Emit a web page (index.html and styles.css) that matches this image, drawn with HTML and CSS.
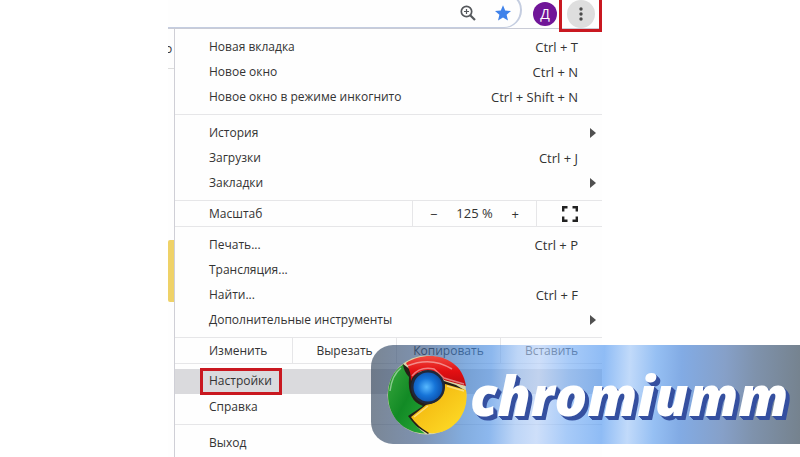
FILE: index.html
```html
<!DOCTYPE html>
<html lang="ru">
<head>
<meta charset="utf-8">
<title>Меню браузера</title>
<link rel="stylesheet" href="styles.css">
</head>
<body>
<main class="shot">
  <header class="toolbar">
    <div class="omnibox">
      <button class="tool" aria-label="Масштаб страницы">
        <svg width="18" height="18" viewBox="0 0 18 18" fill="none" stroke="#55585c" stroke-width="1.7"><circle cx="7.5" cy="7.5" r="5.200"/><path d="M11.2 11.2L16 16" stroke-width="2.2"/><path d="M5 7.5h5M7.5 5v5" stroke-width="1.2"/></svg>
      </button>
      <button class="tool" aria-label="В закладки">
        <svg width="18" height="18" viewBox="0 0 18 18"><path fill="#3f82ea" d="M9 1.2l2.2 5.3 5.8.5-4.4 3.8 1.4 5.7L9 13.4l-5 3.1 1.4-5.7L1 7l5.800-.5z"/></svg>
      </button>
    </div>
    <button class="avatar">Д</button>
    <button class="more" aria-label="Меню">
      <svg width="28" height="28" viewBox="0 0 28 28"><circle cx="14" cy="14" r="14" fill="#dedede"/><g fill="#4b4b4b"><circle cx="14" cy="9" r="1.7"/><circle cx="14" cy="14" r="1.7"/><circle cx="14" cy="19" r="1.7"/></g></svg>
    </button>
  </header>
  <div class="content">
    <aside class="page"><div class="strip">о</div><div class="mark"></div></aside>
    <nav class="menu">
      <div class="group">
        <button class="item"><span>Новая вкладка</span><kbd>Ctrl + T</kbd></button>
        <button class="item"><span>Новое окно</span><kbd>Ctrl + N</kbd></button>
        <button class="item"><span>Новое окно в режиме инкогнито</span><kbd>Ctrl + Shift + N</kbd></button>
      </div>
      <div class="group">
        <button class="item sub"><span>История</span></button>
        <button class="item"><span>Загрузки</span><kbd>Ctrl + J</kbd></button>
        <button class="item sub"><span>Закладки</span></button>
      </div>
      <div class="split zoom">
        <span class="name">Масштаб</span>
        <div class="level"><button>−</button><span>125 %</span><button>+</button></div>
        <button class="full" aria-label="Полный экран">
          <svg width="16" height="16" viewBox="0 0 16 16" fill="none" stroke="#222" stroke-width="2.400"><path d="M1.200 5.500V1.200H5.500M10.500 1.200h4.300v4.300M14.800 10.500v4.300h-4.300M5.500 14.800H1.200v-4.300"/></svg>
        </button>
      </div>
      <div class="group">
        <button class="item"><span>Печать...</span><kbd>Ctrl + P</kbd></button>
        <button class="item"><span>Трансляция...</span></button>
        <button class="item"><span>Найти...</span><kbd>Ctrl + F</kbd></button>
        <button class="item sub"><span>Дополнительные инструменты</span></button>
      </div>
      <div class="split edit">
        <span class="name">Изменить</span>
        <button>Вырезать</button>
        <button>Копировать</button>
        <button>Вставить</button>
      </div>
      <div class="group">
        <button class="item active"><span class="framed">Настройки</span></button>
        <button class="item"><span>Справка</span></button>
      </div>
      <div class="group">
        <button class="item"><span>Выход</span></button>
      </div>
    </nav>
  </div>
</main>
<div class="banner">
  <svg class="logo" width="82" height="80" viewBox="0 0 82 80">
    <defs>
      <linearGradient id="red" x1="0" y1="0" x2="0" y2="1"><stop offset="0" stop-color="#f04a40"/><stop offset=".5" stop-color="#e30f12"/><stop offset="1" stop-color="#bd0b0f"/></linearGradient>
      <linearGradient id="green" x1="0" y1="0" x2="1" y2="1"><stop offset="0" stop-color="#39a83e"/><stop offset=".5" stop-color="#128a25"/><stop offset="1" stop-color="#28a838"/></linearGradient>
      <linearGradient id="yellow" x1="0" y1="0" x2="1" y2="1"><stop offset="0" stop-color="#f0ac08"/><stop offset="1" stop-color="#ffe02a"/></linearGradient>
      <radialGradient id="blue" cx=".45" cy=".5" r=".6"><stop offset="0" stop-color="#58b9ff"/><stop offset=".5" stop-color="#1674d8"/><stop offset="1" stop-color="#0a4ba6"/></radialGradient>
    </defs>
    <circle cx="41" cy="40" r="39.500" fill="#d9d6a8"/>
    <path fill="#251f16" d="M17 9L25 15L70 30L80 36L60 60L42 79L22 66L10 30Z"/>
    <path fill="url(#green)" d="M17 9.500Q18 17 23 22Q21 46 37 51L22 61Q30 72 39 78.500C18 78 2 62 2 40C2 27 7 16 17 9.500Z"/>
    <path fill="url(#red)" d="M20 8C42-6 76 1 80 31L58 25Q50 13 36 16Q27 19 25 26Q25 16 20 8Z"/>
    <path fill="url(#yellow)" d="M59 29L80 35C84 60 65 80 43 78Q31 71 25 62L40 50Q58 47 59 29Z"/>
    <path fill="none" stroke="#fff" stroke-opacity=".45" stroke-width="1.500" d="M21 11Q45 1 66 14M4 36Q6 20 15 13M26 21Q34 11 48 14L58 23L78 29M61 31L78 36M28 62L42 51"/>
    <circle cx="42" cy="32" r="17" fill="#20283a"/>
    <circle cx="42" cy="32" r="14.500" fill="url(#blue)"/>
  </svg>
  <span class="brand">chromiumm</span>
</div>
</body>
</html>
```
FILE: styles.css
```css
* {
  box-sizing: border-box;
}

body {
  margin: 0;
  min-height: 100vh;
  background: #fff;
  color: #333;
  font: 12px/24px "Open Sans", "Noto Sans", sans-serif;
  position: relative;
  overflow: hidden;
}

button {
  padding: 0;
  border: 0;
  background: none;
  color: inherit;
  font: inherit;
}

kbd {
  font: inherit;
  font-size: 13px;
}

svg {
  display: block;
}

.shot {
  width: 54%;
  min-width: 434px;
  margin-left: 21%;
  background: #fefefe;
}

.toolbar {
  display: flex;
  align-items: flex-start;
  height: 29px;
  border-bottom: 1px solid #c9cbd6;
}

.omnibox {
  flex: 1;
  display: flex;
  justify-content: flex-end;
  gap: 17px;
  height: 36px;
  margin-top: -8px;
  padding: 10px 8px 0 0;
  border: 2px solid #c4cde0;
  border-bottom-width: 1px;
  border-left: 0;
  border-radius: 0 18px 18px 0;
}

.tool {
  height: 18px;
}

.avatar {
  width: 24px;
  height: 24px;
  margin: 2px 2px 0 11px;
  border-radius: 50%;
  background: #701598;
  color: #fff;
  font-size: 14px;
}

.more {
  display: flex;
  align-items: flex-start;
  justify-content: center;
  width: 43px;
  height: 35px;
  margin-top: -3px;
  border: 3px solid #c91820;
  z-index: 1;
}

.content {
  display: flex;
}

.page {
  width: 6px;
  overflow: hidden;
}

.strip {
  height: 40px;
  padding-top: 8px;
  border-bottom: 1px solid #ddd;
  text-indent: -3px;
}

.mark {
  height: 62px;
  margin-top: 171px;
  border-radius: 2px 0 0 2px;
  background: #efd268;
}

.menu {
  flex: 1;
  border-left: 1px solid #cfcfd6;
}

.group {
  padding: 5px 0;
}

.group + .group {
  border-top: 1px solid #e6e6e8;
}

.item {
  display: flex;
  justify-content: space-between;
  align-items: center;
  width: 100%;
  height: 25px;
  padding: 0 24px 0 34px;
  text-align: left;
}

.sub {
  padding-right: 6px;
}

.sub::after {
  content: "";
  border: 5px solid transparent;
  border-left: 6px solid #505050;
  border-right: 0;
}

.active {
  background: #dadadd;
}

.framed {
  height: 27px;
  margin-left: -9px;
  padding: 0 7px 0 6px;
  border: 3px solid #c91820;
  line-height: 20px;
  z-index: 1;
}

.split {
  display: grid;
  height: 27px;
  border: solid #e6e6e8;
  border-width: 1px 0;
}

.split > * + * {
  border-left: 1px solid #e6e6e8;
}

.zoom {
  grid-template-columns: 237fr 124fr 66fr;
}

.edit {
  grid-template-columns: 117fr 104fr 104fr 102fr;
}

.name {
  padding-left: 34px;
  line-height: 26px;
}

.level {
  display: flex;
  justify-content: space-between;
  padding: 0 17px;
  font-size: 13px;
}

.full {
  display: grid;
  place-items: center;
}

.banner {
  position: absolute;
  top: 345px;
  left: 371px;
  right: 0;
  display: flex;
  align-items: center;
  height: 99px;
  padding-left: 15px;
  border-radius: 22px 0 0 22px;
  background: linear-gradient(92deg, rgba(51, 69, 91, .65) 0%, rgba(57, 88, 134, .65) 12%, rgba(65, 129, 206, .65) 22%, rgba(80, 146, 229, .65) 28%, rgba(155, 192, 243, .65) 34%, rgba(180, 206, 247, .65) 39%, rgba(121, 175, 245, .65) 46%, rgba(83, 152, 240, .65) 54%, rgba(160, 198, 247, .65) 60%, rgba(94, 158, 237, .65) 66%, rgba(63, 126, 214, .65) 72%, rgba(69, 109, 171, .65) 82%, rgba(58, 88, 128, .65) 89%, rgba(43, 63, 81, .65) 100%);
}

.logo {
  flex: none;
}

.brand {
  padding-left: 2px;
  color: #fff;
  font: italic 800 54px/80px "Open Sans", sans-serif;
  text-shadow: 1px 1px #3550a0, 2px 2px #3550a0, 3px 3px #3550a0, 4px 4px #3550a0;
}
```
